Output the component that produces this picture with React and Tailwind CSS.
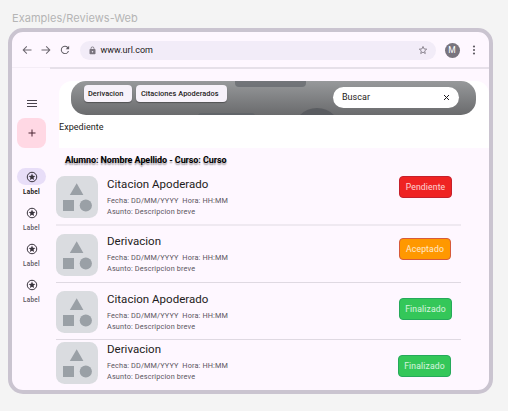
import React from "react";

const rows = [
  { title: "Citacion Apoderado", text: "pt-[1px]", status: "Pendiente", height: "h-[58px]", button: "mt-0 w-[53px] mr-[9px] bg-[#ef2323] border-[#c5202c]" },
  { title: "Derivacion", text: "", status: "Aceptado", height: "h-[57px]", button: "mt-[4px] w-[52px] mr-[10px] bg-[#ff9800] border-[#d65a3c]" },
  { title: "Citacion Apoderado", text: "pt-[1px]", status: "Finalizado", height: "h-[51px]", button: "mt-[7px] w-[53px] mr-[9px] bg-[#34c759] border-[#26a95b]" },
  { title: "Derivacion", text: "", status: "Finalizado", height: "h-[42px]", button: "mt-[13px] w-[53px] mr-[10px] bg-[#34c759] border-[#26a95b]" },
];

function Arrow({ flip }) {
  return (
    <svg className={flip ? "rotate-180" : ""} width="12" height="12" viewBox="0 0 24 24" fill="#68646c">
      <path d="M21 11H6.800l5.600-5.600L11 4 3 12l8 8 1.400-1.400L6.800 13H21z" />
    </svg>
  );
}

function StarCircle() {
  return (
    <svg width="12" height="12" viewBox="0 0 24 24">
      <circle cx="12" cy="12" r="9.5" fill="none" stroke="#38333c" strokeWidth="2" />
      <path fill="#38333c" d="m12 5.2 1.9 4.4 4.8.4-3.6 3.2 1.1 4.7-4.2-2.5-4.2 2.5 1.1-4.7-3.6-3.2 4.8-.4z" />
    </svg>
  );
}

function NavItem({ active }) {
  return (
    <div className="flex h-[36px] w-full flex-col items-center">
      <div className={"flex h-[17px] w-[29px] shrink-0 items-center justify-center rounded-full " + (active ? "bg-[#e8def8]" : "")}>
        <StarCircle />
      </div>
      <span className={"mt-[3px] text-[6.4px] leading-[8px] tracking-[0.25px] " + (active ? "font-bold text-[#1d1b20]" : "font-medium text-[#5b5660]")}>Label</span>
    </div>
  );
}

function Thumb() {
  return (
    <svg className="shrink-0" width="42" height="42" viewBox="0 0 42 42">
      <rect width="42" height="42" rx="8.5" fill="#dadce0" />
      <g fill="#9aa0a6">
        <path d="M20.7 7.3 27.4 19H13.8z" />
        <rect x="7" y="24" width="11" height="11" />
        <circle cx="29.8" cy="29.5" r="6.1" />
      </g>
    </svg>
  );
}

function Row({ row }) {
  return (
    <div className={"flex items-start " + row.height}>
      <Thumb />
      <div className={"ml-[9px] flex flex-col whitespace-nowrap " + row.text}>
        <span className="text-[11.5px] leading-[15px] tracking-[0.02px] text-[#1d1b20]">{row.title}</span>
        <span className="mt-[4px] whitespace-pre text-[7.3px] leading-[10.7px] tracking-[0.13px] text-[#5a5560]">{"Fecha: DD/MM/YYYY  Hora: HH:MM"}</span>
        <span className="text-[7.3px] leading-[10.7px] tracking-[0.15px] text-[#5a5560]">Asunto: Descripcion breve</span>
      </div>
      <button className={"ml-auto flex h-[22px] shrink-0 items-center justify-center rounded-[4px] border text-[8.6px] tracking-[0.15px] text-white/80 " + row.button}>
        {row.status}
      </button>
    </div>
  );
}

export default function App() {
  return (
    <div className="h-[411px] w-[508px] overflow-hidden bg-[#f4f4f4] pl-[8px] pt-[11px] font-['Roboto',sans-serif]">
      <div className="ml-[4px] h-[17px] font-['Inter',sans-serif] text-[11px] leading-[14px] tracking-[0.04px] text-[#b5b5b5]">Examples/Reviews-Web</div>
      <div className="flex h-[366px] w-[485px] flex-col overflow-hidden rounded-[15px] border-[4px] border-[#cac4d0] bg-[#fef7ff]">
        <header className="flex h-[35px] shrink-0 items-center pl-[9px] pt-px">
          <Arrow />
          <div className="ml-[7px]"><Arrow flip /></div>
          <svg className="ml-[7px]" width="12" height="12" viewBox="0 0 24 24" fill="#605d64">
            <path d="M17.900 6.100A8.300 8.300 0 1 0 20 14h-2.100A6.300 6.300 0 1 1 12 5.700c1.700 0 3.200.7 4.400 1.900L13.300 10.700h7V3.700z" />
          </svg>
          <div className="ml-[9px] flex h-[19px] w-[356px] items-center rounded-full bg-[#f2ecf8] pl-[8px] pr-[8px]">
            <svg width="9" height="9" viewBox="0 0 24 24" fill="#79747e">
              <path fillRule="evenodd" d="M18 8h-1V6A5 5 0 0 0 7 6v2H6a2 2 0 0 0-2 2v10c0 1.100.9 2 2 2h12a2 2 0 0 0 2-2V10a2 2 0 0 0-2-2M9 6a3 3 0 0 1 6 0v2H9zm3 11a2 2 0 1 1 0-4 2 2 0 0 1 0 4" />
            </svg>
            <span className="ml-[3.5px] pt-px text-[9px] text-[#1d1b20]">www.url.com</span>
            <svg className="ml-auto" width="10" height="10" viewBox="0 0 24 24" fill="none" stroke="#79747e" strokeWidth="2">
              <path d="m12 3.500 2.500 5.900 6.400.6-4.900 4.200 1.500 6.300-5.500-3.400-5.500 3.400L8 14.200 3.100 10l6.400-.6z" />
            </svg>
          </div>
          <div className="ml-[8.5px] flex h-[15px] w-[15px] items-center justify-center rounded-full bg-[#79747e] text-[8.5px] text-white">M</div>
          <svg className="ml-[8.5px]" width="12" height="12" viewBox="0 0 24 24" fill="#605d64">
            <circle cx="12" cy="5" r="2.200" /><circle cx="12" cy="12" r="2.200" /><circle cx="12" cy="19" r="2.200" />
          </svg>
        </header>
        <div className="flex h-[2px] shrink-0">
          <div className="h-px w-[38px] bg-[#f4edf6]" />
          <div className="h-[1.5px] flex-1 bg-[#e6e0e9]" />
        </div>

        <div className="flex min-h-0 flex-1">
          <nav className="flex w-[38px] shrink-0 flex-col items-center pl-px pt-[29px]">
            <svg width="12" height="12" viewBox="0 0 12 12" stroke="#48434d" strokeWidth="1"><path d="M1 2.500h10M1 5.500h10M1 8.500h10" /></svg>
            <button className="mt-[8px] flex h-[29.5px] w-[29px] items-center justify-center rounded-[8px] bg-[#ffd8e4]">
              <svg width="10" height="10" viewBox="0 0 10 10" stroke="#4a2532" strokeWidth="1"><path d="M1.500 5h7M5 1.500v7" /></svg>
            </button>
            <div className="mt-[20.5px] w-full">
              <NavItem active /><NavItem /><NavItem /><NavItem />
            </div>
          </nav>

          <main className="flex min-w-0 flex-1 flex-col pt-[12px]">
            <section className="ml-[9px] h-[67px] shrink-0 rounded-t-[13px] bg-white">
              <div className="relative ml-[12.400px] flex h-[34px] w-[405px] items-start overflow-hidden rounded-[15px] bg-linear-to-b from-[#97999b] to-[#6a6b6d] pl-[12.500px]">
                <svg className="absolute left-0 top-0" width="405" height="34" viewBox="0 0 405 34" fill="#5f6368">
                  <path fillOpacity=".65" d="M164 0h71v2a4 4 0 0 1-4 4h-63a4 4 0 0 1-4-4z" />
                  <path fillOpacity=".8" d="M127 34q1-2 3-2h51q2 0 3 2z" />
                  <circle fill="#55585c" fillOpacity=".8" cx="246" cy="51" r="24" />
                </svg>
                <span className="relative mt-[4px] flex h-[17px] w-[48.500px] items-center rounded-[4px] bg-[#f7f2fa] pl-[4px] pt-px text-[7.400px] font-medium tracking-[0.07px] text-[#1d1b20] shadow-[0_1px_1px_#00000055]">Derivacion</span>
                <span className="relative ml-[4px] mt-[4px] flex h-[17px] w-[90.500px] items-center rounded-[4px] bg-[#f7f2fa] pl-[4.500px] pt-px text-[7.400px] font-medium tracking-[0.05px] text-[#1d1b20] shadow-[0_1px_1px_#00000055]">Citaciones Apoderados</span>
                <div className="relative ml-auto mr-[17px] mt-[5.500px] flex h-[21.500px] w-[126px] items-center justify-between rounded-full bg-white pl-[8.500px] pr-[9px] text-[9px] tracking-[0.05px] text-[#1d1b20]">
                  <span>Buscar</span>
                  <svg width="7" height="7" viewBox="0 0 7 7" stroke="#1d1b20" strokeWidth="1"><path d="m1 1 5 5m0-5L1 6" /></svg>
                </div>
              </div>
              <div className="mt-[6px] text-[9px] leading-[12px] tracking-[0.05px] text-[#1d1b20]">Expediente</div>
            </section>
            <h1 className="ml-[15px] mt-[5px] h-[14px] text-[9px] font-bold leading-[14px] tracking-[-0.08px] text-black [text-shadow:0_1.500px_1.500px_#00000060]">Alumno: Nombre Apellido - Curso: Curso</h1>
            <div className="ml-[6px] mt-[9px] w-[405px]">
              <Row row={rows[0]} />
              <div className="-mt-[10px] mb-[8px] h-[2px] bg-[#efe9f1]" />
              <Row row={rows[1]} />
              <div className="-mt-[9px] mb-[8px] h-px bg-[#dfd9e2]" />
              <Row row={rows[2]} />
              <div className="-mt-[3px] mb-[2px] h-px bg-[#dfd9e2]" />
              <Row row={rows[3]} />
            </div>
          </main>
        </div>
      </div>
    </div>
  );
}
